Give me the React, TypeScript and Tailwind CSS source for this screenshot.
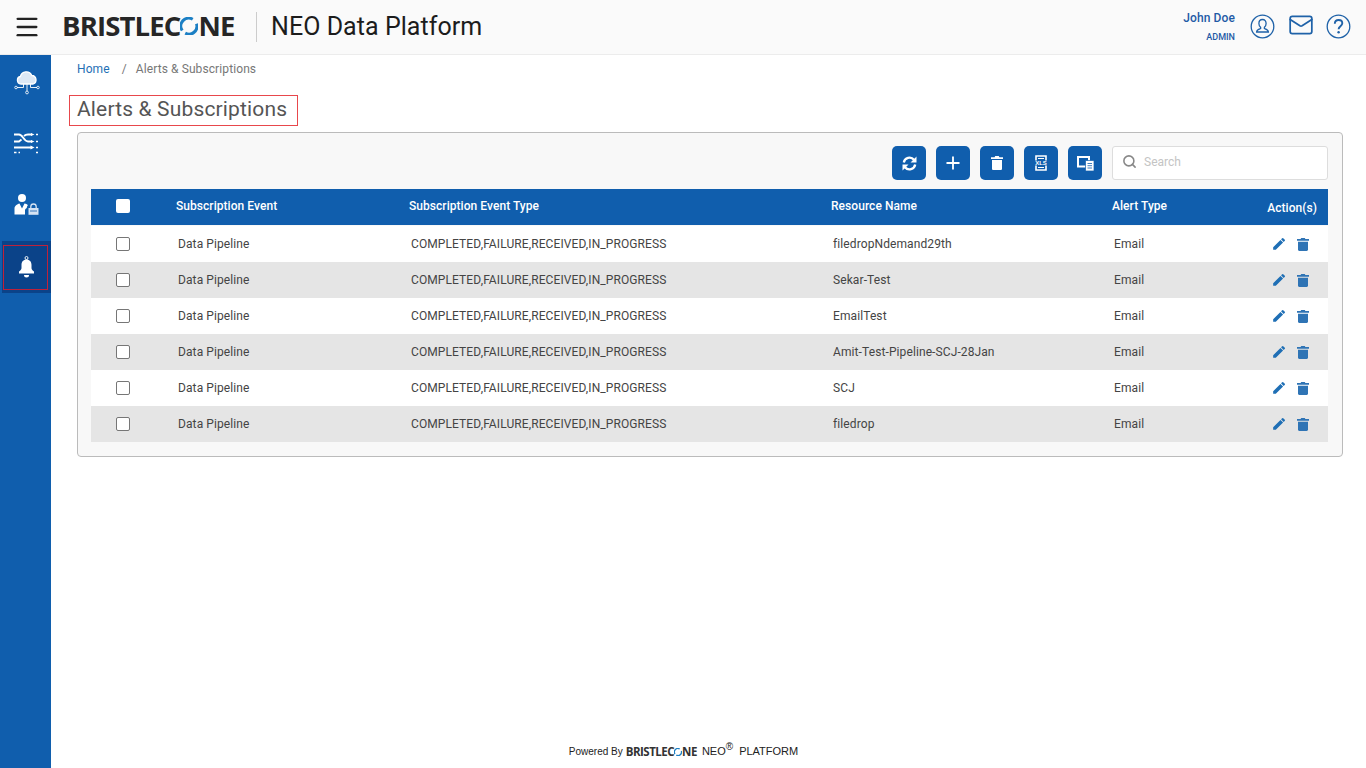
import { Menu, Mail, Search, Plus } from "lucide-react";

const rows = ["filedropNdemand29th", "Sekar-Test", "EmailTest", "Amit-Test-Pipeline-SCJ-28Jan", "SCJ", "filedrop"];
const eventTypes = "COMPLETED,FAILURE,RECEIVED,IN_PROGRESS";

function Logo({ small }: { small?: boolean }) {
  const size = small ? 8 : 18;
  return (
    <span
      className={
        small
          ? "flex items-center font-['Open_Sans',sans-serif] font-bold text-[11.5px] leading-none tracking-[-0.5px] text-[#333]"
          : "flex items-center font-['Open_Sans',sans-serif] font-bold text-[27.5px] leading-none tracking-[-0.85px] text-[#262626]"
      }
    >
      BRISTLEC
      <svg width={size} height={size} viewBox="0 0 24 24" fill="none" className="shrink-0">
        <path d="M3 18 A10.500 10.500 0 0 1 17 3" stroke="#1b7fc4" strokeWidth="4" />
        <path d="M22 9 A10.500 10.500 0 0 1 7 21.500" stroke="#1b7fc4" strokeWidth="4" />
      </svg>
      NE
    </span>
  );
}

function CloudIcon() {
  return (
    <svg width="26" height="25" viewBox="0 0 26 25" fill="none" stroke="white" className="ml-[2px] mt-[-1px]">
      <path d="M7 14a3.800 3.800 0 0 1-.6-7.500 6 6 0 0 1 11.400-1 4.400 4.400 0 0 1 1.400 8.500z" fill="#dce8f5" strokeWidth="1.300" />
      <path d="M13 14v7M9.500 14v3.500H3M16.500 14v3.500H23" strokeWidth="0.900" />
      <circle cx="2" cy="17.500" r="1.300" strokeWidth="0.800" />
      <circle cx="24" cy="17.500" r="1.300" strokeWidth="0.800" />
      <circle cx="13" cy="22.500" r="1.400" strokeWidth="0.800" />
    </svg>
  );
}

function RoutesIcon() {
  return (
    <svg width="24" height="21" viewBox="0 0 24 21" fill="none" stroke="white" strokeWidth="1.500" className="ml-px">
      <path d="M0 1.500h5c4 0 4.500 7 9 7h4" strokeWidth="1.800" />
      <path d="M0 8.500h5l2.500-2M10 3c1-1 2-1.500 4-1.500h4" strokeWidth="1.800" />
      <path d="M0 14.500h18" strokeWidth="2" />
      <path d="M17 0l3.500 1.500L17 3zM17 7l3.500 1.500L17 10zM16.500 12.500l4 2-4 2z" fill="white" stroke="none" />
      <path d="M22 1.500h2M22 8.500h2M22 14.500h2M0 19.500h2.500M4.500 19.500h1.500M22 19.500h2" />
    </svg>
  );
}

function UserLockIcon() {
  return (
    <svg width="25" height="21" viewBox="0 0 25 21" fill="white" className="ml-px">
      <circle cx="8" cy="4" r="4" />
      <path d="M0.500 20.500v-6c0-2.500 2.500-4.500 5-5l2.500 5 2.500-5c1.500.3 2.500.8 3.300 1.600-.2 1-1 1.500-1 2.900-1.200.5-1.800 1.300-1.800 2.500v4z" />
      <path d="M14.500 14h10v6.800h-10z" fill="#d5e3f3" />
      <path d="M16.800 14v-1.300a2.700 2.700 0 0 1 5.400 0V14" fill="none" stroke="#d5e3f3" strokeWidth="1.300" />
      <path d="M16 17h7" stroke="#105ead" strokeWidth="0.800" />
    </svg>
  );
}

function BellIcon() {
  return (
    <svg width="17" height="23" viewBox="0 0 17 23" fill="white" className="ml-[2px]">
      <circle cx="8.500" cy="2" r="1.500" fill="none" stroke="white" strokeWidth="0.900" />
      <path d="M8.500 3.500c-3.200 0-5 2.400-5 5.300v3.200c0 1.300-.9 2.500-2.500 3.400V17.500h15v-2.100c-1.600-.9-2.500-2.100-2.500-3.400V8.800c0-2.900-1.800-5.300-5-5.300z" />
      <path d="M6 19h5a2.500 2.500 0 0 1-5 0z" />
    </svg>
  );
}

function TrashSolid({ height, color }: { height: number; color: string }) {
  return (
    <svg width="12" height={height} viewBox="0 0 12 14" fill={color} preserveAspectRatio="none">
      <path d="M1 4h10v8.700c0 .7-.6 1.300-1.300 1.300H2.300C1.600 14 1 13.400 1 12.700zM0 1.200h3.600L4.200 0h3.600l.6 1.200H12V3H0z" />
    </svg>
  );
}

function PencilSolid() {
  return (
    <svg width="14" height="14" viewBox="0 0 24 24" fill="#1f6fb5">
      <path d="M2 17.500V22h4.500L19 9.500 14.500 5zM22 6.500a1.200 1.200 0 0 0 0-1.700l-2.800-2.800a1.200 1.200 0 0 0-1.700 0L15.500 4l4.500 4.500z" />
    </svg>
  );
}

function SyncIcon() {
  return (
    <svg width="15" height="15" viewBox="0 0 15 15" fill="none" stroke="white" strokeWidth="2.300">
      <path d="M1.800 6.500A5.800 5.800 0 0 1 12 3.800" />
      <path d="M13.200 8.500A5.800 5.800 0 0 1 3 11.200" />
      <path d="M14.500 0.500v6h-6zM0.500 14.500v-6h6z" fill="white" stroke="none" />
    </svg>
  );
}

function XlsIcon() {
  return (
    <svg width="16" height="16" viewBox="0 0 16 16" fill="none">
      <path d="M3 1h10v14H3z" stroke="white" strokeWidth="1.600" />
      <path d="M5 3.500h6M5 12.500h6" stroke="white" strokeWidth="1.200" />
      <path d="M0 5.500h16v5H0z" fill="#105ead" />
      <text x="8" y="10.300" textAnchor="middle" fontSize="6" fontWeight="700" fill="white" className="font-['Liberation_Sans',sans-serif]">
        XLS
      </text>
    </svg>
  );
}

function ColumnsIcon() {
  return (
    <svg width="17" height="15" viewBox="0 0 17 15" fill="none">
      <path d="M1 1h11v9.500H1z" stroke="white" strokeWidth="2" />
      <path d="M8.500 4.500h8.500v10.500H8.500z" fill="white" stroke="#105ead" strokeWidth="0.700" />
      <path d="M10.500 7.500h4.500M10.500 9.700h4.500M10.500 12h4.500" stroke="#105ead" strokeWidth="0.800" />
    </svg>
  );
}

function UserCircleIcon() {
  return (
    <svg width="25" height="25" viewBox="0 0 25 25" fill="none" stroke="#1f62a8" strokeWidth="1.300">
      <circle cx="12.500" cy="12.500" r="11.300" />
      <path d="M12.500 5.500c-2.300 0-3.600 1.800-3.600 4 0 1.600.7 3 1.700 3.800v1.200c-1.700.6-4 1.300-4 3.500h11.800c0-2.200-2.300-2.900-4-3.500v-1.200c1-.8 1.700-2.200 1.700-3.800 0-2.200-1.300-4-3.600-4z" />
    </svg>
  );
}

function ToolButton({ children }: { children: React.ReactNode }) {
  return (
    <button className="w-[34px] h-[34px] rounded-[5px] bg-[#105ead] flex items-center justify-center">
      {children}
    </button>
  );
}

function SideItem({ children }: { children: React.ReactNode }) {
  return <div className="h-[61px] flex items-center justify-center">{children}</div>;
}

export default function App() {
  return (
    <div className="h-[768px] flex flex-col overflow-hidden bg-white font-['Roboto',sans-serif]">
      <header className="h-[55px] shrink-0 flex items-center bg-[#fafafa] border-b border-[#ececec]">
        <Menu className="w-[28px] h-[28px] ml-[13px] text-[#222]" strokeWidth={2} />
        <div className="ml-[21px] mt-[-3px] w-[172px] shrink-0">
          <Logo />
        </div>
        <div className="w-px h-[30px] bg-[#ccc] ml-[22px]" />
        <span className="ml-[14px] text-[25px] text-[#1c1c1c] tracking-[0.05px]">NEO Data Platform</span>
        <div className="ml-auto flex items-center">
          <div className="flex flex-col items-end mt-[-1px]">
            <span className="text-[12px] leading-[14px] font-medium tracking-[0.1px] text-[#1f5aa6]">John Doe</span>
            <span className="text-[9px] leading-[11px] mt-[7px] font-medium text-[#1f5aa6]">ADMIN</span>
          </div>
          <div className="ml-[15px] mt-[-2px]">
            <UserCircleIcon />
          </div>
          <Mail className="ml-[13px] mt-[-4px] w-[26px] h-[26px] text-[#1f62a8]" strokeWidth={1.6} />
          <svg width="25" height="25" viewBox="0 0 25 25" fill="none" stroke="#1f62a8" className="ml-[12px] mr-[15px] mt-[-2px]">
            <circle cx="12.500" cy="12.500" r="11.300" strokeWidth="1.300" />
            <path d="M8.800 9.800c0-2.300 1.600-3.800 3.800-3.800 2.200 0 3.700 1.400 3.700 3.300 0 2.900-3.700 3-3.700 5.900" strokeWidth="1.900" />
            <circle cx="12.600" cy="18.300" r="1.200" fill="#1f62a8" stroke="none" />
          </svg>
        </div>
      </header>

      <div className="flex-1 flex min-h-0">
        <aside className="w-[51px] shrink-0 bg-[#105ead]">
          <div className="flex flex-col mt-[-3px]">
            <SideItem><CloudIcon /></SideItem>
            <SideItem><RoutesIcon /></SideItem>
            <SideItem><UserLockIcon /></SideItem>
            <div className="mt-[6px] ml-[2px] h-[52px] bg-[#0b4389] pl-[1px] pt-[4px]">
              <div className="w-[45px] h-[45px] border border-[#c0213a] flex items-center justify-center">
                <BellIcon />
              </div>
            </div>
          </div>
        </aside>

        <main className="flex-1 flex flex-col min-w-0">
          <nav className="pl-[26px] pt-[7px] flex text-[12px] leading-[14px] tracking-[0.1px]">
            <span className="text-[#1f6fb5]">Home</span>
            <span className="text-[#777] ml-[12px]">/</span>
            <span className="text-[#777] ml-[9px]">Alerts &amp; Subscriptions</span>
          </nav>
          <h1 className="ml-[18px] mt-[19px] w-[229px] h-[31px] border border-[#e8474c] pl-[7px] text-[21px] leading-[27px] tracking-[0.15px] whitespace-nowrap text-[#555] font-normal">
            Alerts &amp; Subscriptions
          </h1>

          <section className="ml-[26px] mr-[23px] mt-[6px] h-[325px] border border-[#bbb] rounded-[4px] bg-[#f8f8f8] pl-[13px] pr-[14px] pt-[13px]">
            <div className="flex items-center justify-end gap-[10px]">
              <ToolButton><SyncIcon /></ToolButton>
              <ToolButton><Plus className="w-[20px] h-[20px] text-white" strokeWidth={2.2} /></ToolButton>
              <ToolButton><TrashSolid height={14} color="white" /></ToolButton>
              <ToolButton><XlsIcon /></ToolButton>
              <ToolButton><ColumnsIcon /></ToolButton>
              <div className="w-[216px] h-[34px] bg-white border border-[#ddd] rounded-[3px] flex items-center pl-[9px]">
                <Search className="w-[15px] h-[15px] mt-[-3px] text-[#888]" strokeWidth={2.5} />
                <span className="ml-[7px] mt-[-2px] text-[12px] text-[#c4c4c4]">Search</span>
              </div>
            </div>

            <div className="mt-[9px] mb-px h-[36px] bg-[#105ead] grid grid-cols-[85px_233px_422px_281px_1fr] items-center text-[12px] font-medium tracking-[0.05px] text-white">
              <div className="pl-[25px]">
                <div className="w-[14px] h-[14px] bg-white rounded-[2px] mt-[-3px]" />
              </div>
              <span className="mt-[-2px]">Subscription Event</span>
              <span className="mt-[-2px]">Subscription Event Type</span>
              <span className="mt-[-2px]">Resource Name</span>
              <span className="text-right pr-[11px]">
                <span className="float-left mt-[-1px]">Alert Type</span>
                <span className="inline-block mt-px">Action(s)</span>
              </span>
            </div>
            {rows.map((name, i) => (
              <div
                key={name}
                className={
                  i % 2 === 0
                    ? "h-[36px] bg-white grid grid-cols-[85px_233px_422px_281px_1fr] items-center text-[12px] tracking-[0.1px] text-[#444]"
                    : "h-[36px] bg-[#e5e5e5] grid grid-cols-[85px_233px_422px_281px_1fr] items-center text-[12px] tracking-[0.1px] text-[#444]"
                }
              >
                <div className="pl-[25px]">
                  <div className="w-[14px] h-[14px] bg-white border border-[#767676] rounded-[2px]" />
                </div>
                <span className="pl-[2px]">Data Pipeline</span>
                <span className="pl-[2px]">{eventTypes}</span>
                <span className="pl-[2px]">{name}</span>
                <div className="pl-[2px] flex items-center">
                  <span>Email</span>
                  <div className="ml-auto mr-[19px] flex items-center gap-[11px]">
                    <PencilSolid />
                    <TrashSolid height={13} color="#2f74b5" />
                  </div>
                </div>
              </div>
            ))}
          </section>

          <footer className="mt-auto h-[35px] flex items-start justify-center pr-[50px] pt-[8px] font-['Liberation_Sans',sans-serif] text-[#222]">
            <span className="text-[10px] mt-[3px]">Powered By</span>
            <span className="ml-[3px] mt-[5px]"><Logo small /></span>
            <span className="ml-[5px] text-[11px] leading-[16px] mt-[2px]">
              NEO<sup className="text-[10px]">®</sup>
            </span>
            <span className="ml-[6px] text-[11px] leading-[16px] mt-[2px]">PLATFORM</span>
          </footer>
        </main>
      </div>
    </div>
  );
}
